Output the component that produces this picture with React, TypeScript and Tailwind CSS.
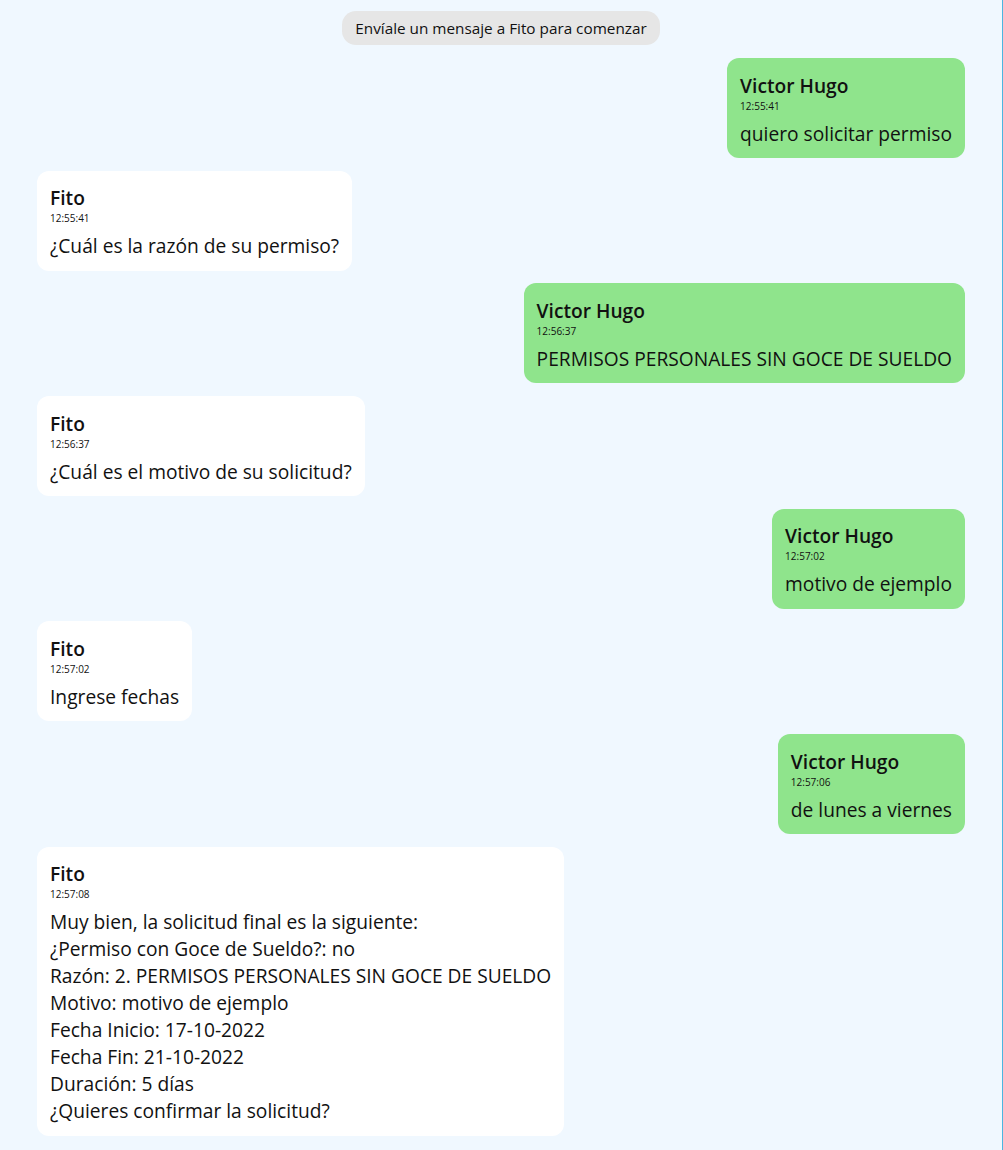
import React from "react";

type Msg = { from: "user" | "bot"; time: string; lines: string[] };

const messages: Msg[] = [
  { from: "user", time: "12:55:41", lines: ["quiero solicitar permiso"] },
  { from: "bot", time: "12:55:41", lines: ["¿Cuál es la razón de su permiso?"] },
  { from: "user", time: "12:56:37", lines: ["PERMISOS PERSONALES SIN GOCE DE SUELDO"] },
  { from: "bot", time: "12:56:37", lines: ["¿Cuál es el motivo de su solicitud?"] },
  { from: "user", time: "12:57:02", lines: ["motivo de ejemplo"] },
  { from: "bot", time: "12:57:02", lines: ["Ingrese fechas"] },
  { from: "user", time: "12:57:06", lines: ["de lunes a viernes"] },
  {
    from: "bot",
    time: "12:57:08",
    lines: [
      "Muy bien, la solicitud final es la siguiente:",
      "¿Permiso con Goce de Sueldo?: no",
      "Razón: 2. PERMISOS PERSONALES SIN GOCE DE SUELDO",
      "Motivo: motivo de ejemplo",
      "Fecha Inicio: 17-10-2022",
      "Fecha Fin: 21-10-2022",
      "Duración: 5 días",
      "¿Quieres confirmar la solicitud?",
    ],
  },
];

function Bubble({ msg }: { msg: Msg }) {
  const isUser = msg.from === "user";
  return (
    <div className={`flex ${isUser ? "justify-end" : "justify-start"}`}>
      <div
        className={`rounded-xl px-[13px] pt-[14.5px] pb-[11.5px] text-[#111] ${
          isUser ? "bg-[#8fe48c]" : "bg-white"
        }`}
      >
        <div className="text-[19.2px] leading-[26px] font-semibold">{isUser ? "Victor Hugo" : "Fito"}</div>
        <div className="text-[10px] leading-[15px]">{msg.time}</div>
        <div className="mt-[6px] text-[19.2px] leading-[27px]">
          {msg.lines.map((l, i) => (
            <div key={i}>{l}</div>
          ))}
        </div>
      </div>
    </div>
  );
}

export default function App() {
  return (
    <main
      className="min-h-screen w-full bg-[#f0f8ff] border-r border-[#4cb5e1] pt-[11px] pb-[13px] pl-[37px] pr-[37px]"
      style={{ fontFamily: '"Segoe UI", "Open Sans", "Noto Sans", sans-serif' }}
    >
      <div className="flex justify-center">
        <div className="rounded-[14px] bg-[#e6e6e6] px-[13px] h-[34px] flex items-center text-[15.3px] text-[#111]">
          Envíale un mensaje a Fito para comenzar
        </div>
      </div>

      <div className="mt-[13px] flex flex-col gap-[12.7px]">
        {messages.map((m, i) => (
          <Bubble key={i} msg={m} />
        ))}
      </div>
    </main>
  );
}
